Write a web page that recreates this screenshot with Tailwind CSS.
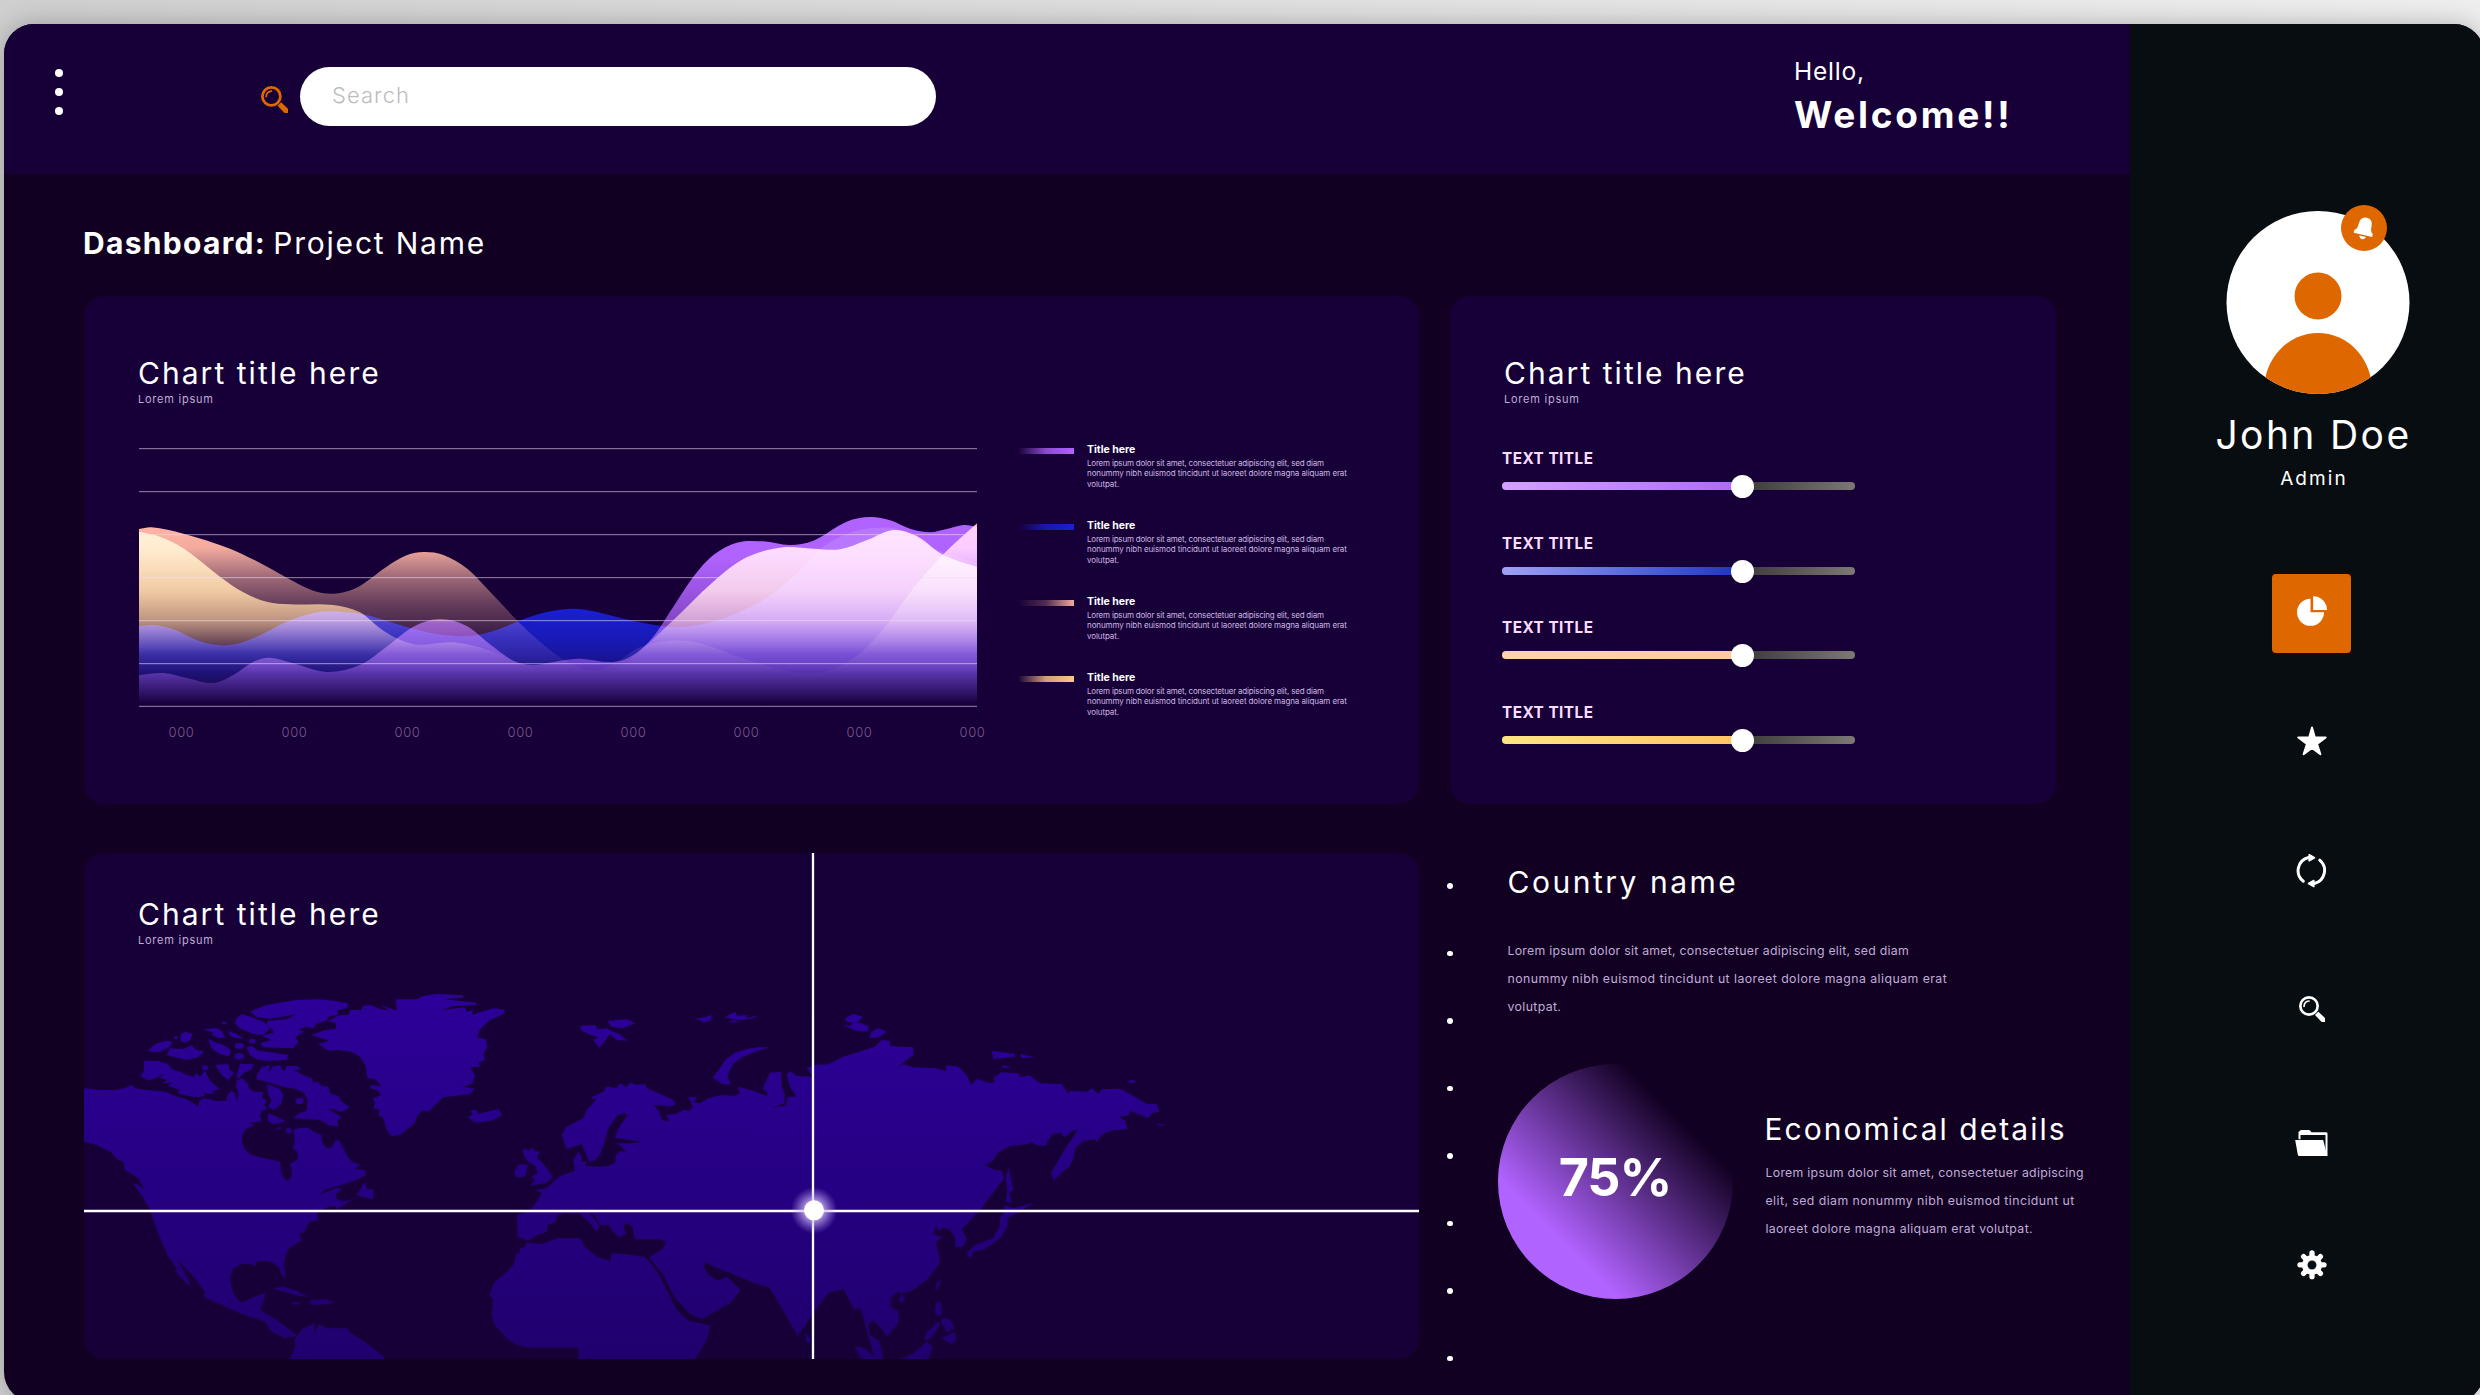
<!DOCTYPE html>
<html lang="en">
<head>
<meta charset="utf-8">
<title>Dashboard</title>
<script src="https://cdn.jsdelivr.net/npm/@tailwindcss/browser@4"></script>
</head>
<body class="w-[2480px] h-[1395px] overflow-hidden font-['Inter',sans-serif] text-white bg-linear-to-r from-[#cfcfcf] to-[#eeeeee]">
<div class="ml-1 mt-6 w-[2480px] h-[1378px] rounded-[30px] overflow-hidden flex bg-[#110022] shadow-[0_0_24px_rgba(0,0,0,0.25)]">
  <main class="w-[2126px] shrink-0">
    <header class="h-[150px] bg-[#170037] flex items-start">
      <div class="ml-[51px] mt-[45px] flex flex-col gap-[11px]">
        <i class="size-2 rounded-full bg-white"></i><i class="size-2 rounded-full bg-white"></i><i class="size-2 rounded-full bg-white"></i>
      </div>
      <svg class="ml-[198px] mt-[62px] w-[27px] h-[27px] shrink-0 text-[#df6700]" viewBox="236 108 78 78" fill="none" stroke="currentColor"><circle cx="266" cy="138" r="26" stroke-width="8"/><path d="M251 139Q252 124 266 123" stroke-width="5" stroke-linecap="round"/><path d="M284 165L294 155L314 174V186H304Z" fill="currentColor" stroke="none"/></svg>
      <div class="ml-3 mt-[43px] w-[636px] h-[59px] shrink-0 rounded-full bg-white flex items-center pl-[32px] pb-[3px] text-[22px] font-light tracking-[0.048em] text-[#bdbdbd]">Search</div>
      <div class="ml-[858px] mt-8 whitespace-nowrap">
        <p class="text-[24.5px] leading-[30px] tracking-[0.032em]">Hello,</p>
        <p class="mt-[5px] text-[37px] leading-[48px] font-bold tracking-[0.074em]">Welcome!!</p>
      </div>
    </header>
    <h1 class="mt-[49px] ml-[79px] text-[30px] leading-10 flex gap-[7px]"><b class="tracking-[0.044em]">Dashboard:</b><span class="tracking-[0.06em]">Project Name</span></h1>
    <div class="mt-[33px] ml-20 flex gap-[31px]">
      <section class="w-[1335px] h-[508px] rounded-[20px] bg-[#170037] pt-[58px] pl-[55px]">
        <h2 class="-ml-px text-[30px] leading-[38px] tracking-[0.068em]">Chart title here</h2>
        <p class="-ml-px text-[11px] leading-[14px] tracking-[0.07em] text-[#c0acd8]">Lorem ipsum</p>
        <div class="mt-[42px] flex">
          <div class="w-[838px]">
            <svg class="block isolate w-[838px] h-[259px]" viewBox="57 84 2514 777" preserveAspectRatio="none">
              <defs>
                <linearGradient id="salmon" gradientUnits="userSpaceOnUse" x1="0" x2="0" y1="300" y2="860"><stop offset=".05" stop-color="#ffb3a4"/><stop offset=".15" stop-color="#ffb3a4" stop-opacity=".95"/><stop offset=".3" stop-color="#ffb3a4" stop-opacity=".6"/><stop offset=".45" stop-color="#ffb3a4" stop-opacity=".34"/><stop offset=".62" stop-color="#ffb3a4" stop-opacity=".15"/><stop offset=".82" stop-color="#ffb3a4" stop-opacity=".03"/><stop offset="1" stop-color="#ffb3a4" stop-opacity="0"/></linearGradient>
                <linearGradient id="cream" gradientUnits="userSpaceOnUse" x1="0" x2="0" y1="300" y2="860"><stop offset=".1" stop-color="#ffc98a"/><stop offset=".38" stop-color="#ffc98a" stop-opacity=".88"/><stop offset=".54" stop-color="#ffc98a" stop-opacity=".62"/><stop offset=".66" stop-color="#ffc98a" stop-opacity=".25"/><stop offset=".72" stop-color="#ffc98a" stop-opacity=".06"/><stop offset=".82" stop-color="#ffc98a" stop-opacity="0"/></linearGradient>
                <linearGradient id="blue" gradientUnits="userSpaceOnUse" x1="0" x2="0" y1="300" y2="860"><stop offset=".48" stop-color="#1a1fd2"/><stop offset=".62" stop-color="#1a1fd2" stop-opacity=".85"/><stop offset=".72" stop-color="#1a1fd2" stop-opacity=".68"/><stop offset=".87" stop-color="#1a1fd2" stop-opacity=".25"/><stop offset="1" stop-color="#1a1fd2" stop-opacity="0"/></linearGradient>
                <linearGradient id="purple" gradientUnits="userSpaceOnUse" x1="0" x2="0" y1="300" y2="860"><stop offset=".2" stop-color="#b163ff"/><stop offset=".5" stop-color="#b163ff" stop-opacity=".75"/><stop offset=".77" stop-color="#b163ff" stop-opacity=".5"/><stop offset=".9" stop-color="#b163ff" stop-opacity=".2"/><stop offset=".98" stop-color="#b163ff" stop-opacity="0"/></linearGradient>
              </defs>
              <g id="areas"></g>
              <path d="M57 86H2571M57 215H2571M57 344H2571M57 473H2571M57 602H2571M57 731H2571M57 859H2571" stroke="#efdcf8" stroke-opacity=".6" stroke-width="3"/>
            </svg>
            <div class="mt-[17px] -ml-[14px] w-[904px] flex text-[13px] leading-4 font-light tracking-[0.05em] text-[#79588a] text-center">
              <span class="w-[113px]">000</span><span class="w-[113px]">000</span><span class="w-[113px]">000</span><span class="w-[113px]">000</span><span class="w-[113px]">000</span><span class="w-[113px]">000</span><span class="w-[113px]">000</span><span class="w-[113px]">000</span>
            </div>
          </div>
          <div class="ml-[41px] -mt-[5px] whitespace-nowrap">
            <div class="flex h-[76px]"><i class="mt-[5px] w-[56px] h-1.5 bg-linear-to-r from-[#b163ff]/0 via-[#b163ff]/75 to-[#b163ff]"></i><div class="ml-[13px]"><p class="text-[10.5px] leading-[13px] font-bold">Title here</p><p class="mt-[2px] text-[8px] leading-[10.3px] text-[#cbb8e2]"><span class="tracking-[-0.025em]">Lorem ipsum dolor sit amet, consectetuer adipiscing elit, sed diam</span><br><span class="tracking-[-0.012em]">nonummy nibh euismod tincidunt ut laoreet dolore magna aliquam erat</span><br><span class="tracking-[-0.012em]">volutpat.</span></p></div></div>
            <div class="flex h-[76px]"><i class="mt-[5px] w-[56px] h-1.5 bg-linear-to-r from-[#1a1fd2]/0 via-[#1a1fd2]/75 to-[#1a1fd2]"></i><div class="ml-[13px]"><p class="text-[10.5px] leading-[13px] font-bold">Title here</p><p class="mt-[2px] text-[8px] leading-[10.3px] text-[#cbb8e2]"><span class="tracking-[-0.025em]">Lorem ipsum dolor sit amet, consectetuer adipiscing elit, sed diam</span><br><span class="tracking-[-0.012em]">nonummy nibh euismod tincidunt ut laoreet dolore magna aliquam erat</span><br><span class="tracking-[-0.012em]">volutpat.</span></p></div></div>
            <div class="flex h-[76px]"><i class="mt-[5px] w-[56px] h-1.5 bg-linear-to-r from-[#ffb3a4]/0 via-[#ffb3a4]/25 to-[#ffb3a4]/95"></i><div class="ml-[13px]"><p class="text-[10.5px] leading-[13px] font-bold">Title here</p><p class="mt-[2px] text-[8px] leading-[10.3px] text-[#cbb8e2]"><span class="tracking-[-0.025em]">Lorem ipsum dolor sit amet, consectetuer adipiscing elit, sed diam</span><br><span class="tracking-[-0.012em]">nonummy nibh euismod tincidunt ut laoreet dolore magna aliquam erat</span><br><span class="tracking-[-0.012em]">volutpat.</span></p></div></div>
            <div class="flex h-[76px]"><i class="mt-[5px] w-[56px] h-1.5 bg-linear-to-r from-[#ffc68a]/0 via-[#ffc68a]/80 to-[#ffc68a]"></i><div class="ml-[13px]"><p class="text-[10.5px] leading-[13px] font-bold">Title here</p><p class="mt-[2px] text-[8px] leading-[10.3px] text-[#cbb8e2]"><span class="tracking-[-0.025em]">Lorem ipsum dolor sit amet, consectetuer adipiscing elit, sed diam</span><br><span class="tracking-[-0.012em]">nonummy nibh euismod tincidunt ut laoreet dolore magna aliquam erat</span><br><span class="tracking-[-0.012em]">volutpat.</span></p></div></div>
          </div>
        </div>
      </section>
      <section class="w-[606px] h-[508px] rounded-[20px] bg-[#170037] pt-[58px] pl-[52px]">
        <h2 class="ml-[2px] text-[30px] leading-[38px] tracking-[0.068em]">Chart title here</h2>
        <p class="ml-[2px] text-[11px] leading-[14px] tracking-[0.07em] text-[#c0acd8]">Lorem ipsum</p>
        <div class="mt-[44px] flex flex-col">
          <div class="h-[84.6px]"><p class="text-[15.3px] leading-[18px] font-bold tracking-[0.031em] text-[#fbdcff]">TEXT TITLE</p><div class="relative mt-[14px] w-[353px] h-2 rounded-full bg-linear-to-r from-[#2c2c2c] from-60% to-[#7d7875]"><div class="w-[241px] h-2 rounded-l-full bg-linear-to-r from-[#d3a2ff] to-[#ad68fa]"></div><i class="absolute left-[229px] -top-[7px] size-[23px] rounded-full bg-white"></i></div></div>
          <div class="h-[84.6px]"><p class="text-[15.3px] leading-[18px] font-bold tracking-[0.031em] text-[#fbdcff]">TEXT TITLE</p><div class="relative mt-[14px] w-[353px] h-2 rounded-full bg-linear-to-r from-[#2c2c2c] from-60% to-[#7d7875]"><div class="w-[241px] h-2 rounded-l-full bg-linear-to-r from-[#a2a0f5] to-[#1c30c0]"></div><i class="absolute left-[229px] -top-[7px] size-[23px] rounded-full bg-white"></i></div></div>
          <div class="h-[84.6px]"><p class="text-[15.3px] leading-[18px] font-bold tracking-[0.031em] text-[#fbdcff]">TEXT TITLE</p><div class="relative mt-[14px] w-[353px] h-2 rounded-full bg-linear-to-r from-[#2c2c2c] from-60% to-[#7d7875]"><div class="w-[241px] h-2 rounded-l-full bg-linear-to-r from-[#ffd2b0] to-[#ffc9a2]"></div><i class="absolute left-[229px] -top-[7px] size-[23px] rounded-full bg-white"></i></div></div>
          <div class="h-[84.6px]"><p class="text-[15.3px] leading-[18px] font-bold tracking-[0.031em] text-[#fbdcff]">TEXT TITLE</p><div class="relative mt-[14px] w-[353px] h-2 rounded-full bg-linear-to-r from-[#2c2c2c] from-60% to-[#7d7875]"><div class="w-[241px] h-2 rounded-l-full bg-linear-to-r from-[#ffe585] to-[#ffc463]"></div><i class="absolute left-[229px] -top-[7px] size-[23px] rounded-full bg-white"></i></div></div>
        </div>
      </section>
    </div>
    <div class="mt-[49px] ml-20 flex">
      <section class="relative w-[1335px] h-[506px] shrink-0 rounded-[20px] overflow-hidden bg-[#170037] pt-[42px] pl-[54px]">
        <h2 class="text-[30px] leading-[38px] tracking-[0.068em]">Chart title here</h2>
        <p class="text-[11px] leading-[14px] tracking-[0.07em] text-[#c0acd8]">Lorem ipsum</p>
        <svg class="absolute inset-0 w-[1335px] h-[506px]" viewBox="12 -321 4005 1518">
          <defs>
            <linearGradient id="land" gradientUnits="userSpaceOnUse" x1="0" x2="0" y1="100" y2="1200"><stop stop-color="#2d0099"/><stop offset=".5" stop-color="#260083"/><stop offset="1" stop-color="#20006d"/></linearGradient>
            <radialGradient id="glow"><stop offset=".4" stop-color="#d9c4ff" stop-opacity=".75"/><stop offset="1" stop-color="#b79bf0" stop-opacity="0"/></radialGradient>
          </defs>
          <g fill="url(#land)">
            <!-- North America -->
            <path d="M12 385L60 390 110 390 140 382 155 375 165 385 200 390 255 395 285 408 320 418 345 432 355 440 358 422 372 415 390 418 405 423 440 423 442 405 455 392 465 400 470 425 476 402 468 380 470 362 485 355 503 370 508 388 525 396 550 395 545 415 560 420 553 436 562 447 545 452 540 470 545 484 510 488 522 495 497 508 487 525 485 545 495 568 510 583 540 592 600 605 603 635 612 655 622 662 633 652 636 632 630 612 648 602 655 590 650 572 638 565 645 545 640 510 660 503 685 503 700 515 725 525 725 545 740 565 755 562 765 545 775 538 790 565 800 585 815 605 840 614 825 627 855 630 858 645 830 660 760 682 735 688 720 703 750 692 775 682 785 688 770 700 768 715 790 725 810 720 825 710 812 722 770 748 765 738 745 740 712 758 715 780 690 785 680 800 672 818 658 820 665 842 645 852 625 868 615 890 612 915 617 958 605 945 598 925 580 908 560 903 530 903 528 918 510 912 485 912 460 925 450 950 455 985 465 1008 483 1028 520 1012 557 998 550 1025 540 1050 590 1080 650 1125 640 1132 628 1130 615 1135 575 1115 555 1085 480 1060 380 1015 370 1005 377 1000 345 955 290 895 325 960 333 982 300 950 285 930 290 925 262 885 235 820 215 765 210 750 185 705 158 670 175 675 193 688 175 655 135 630 130 605 112 598 95 578 50 555 12 545Z"/>
            <path d="M192 302L235 303 262 312 280 330 300 335 320 345 340 350 350 340 360 350 375 332 390 362 418 387 395 395 405 402 370 398 375 408 350 412 310 405 292 398 300 390 265 378 275 368 245 370 262 360 240 355 250 342 235 350 205 362 182 348 192 330Z"/>
            <path d="M205 272L225 252 260 242 278 245 268 262 240 275 215 276ZM300 240L303 222 318 215 337 222 332 240 312 248ZM260 285L270 265 310 268 335 255 345 268 372 275 355 292 320 300 285 292ZM370 208L410 205 425 212 434 232 420 235 395 225 400 218ZM385 235L400 245 430 255 452 270 448 290 420 282 400 270 392 258ZM445 212L470 222 490 235 470 235 450 228ZM465 190L470 175 485 162 515 172 550 185 570 205 550 225 520 222 480 205ZM510 155L560 135 600 128 650 120 715 118 760 122 803 130 803 142 770 152 775 163 745 170 740 182 710 190 700 205 680 200 655 208 672 215 645 232 655 245 640 265 550 262 540 250 575 240 545 228 580 218 580 210 560 195 562 183 620 178 650 162 600 172 565 176 530 170ZM500 262L515 258 535 272 560 275 625 285 620 300 560 303 530 298 510 285ZM470 345L480 312 520 312 515 328 490 340 475 358ZM405 315L445 312 448 328 462 340 445 360 425 345Z"/>
            <path d="M530 345L545 322 570 315 565 340 580 318 600 316 612 335 620 318 650 318 665 328 640 330 670 345 695 355 700 368 715 365 725 378 745 380 750 400 775 408 785 425 808 440 795 452 780 455 762 448 740 445 775 465 785 475 772 480 775 500 745 495 720 480 690 478 640 475 655 462 680 452 683 420 672 400 650 388 615 382 590 375 560 365 530 358ZM560 372L600 388 610 405 603 432 580 450 565 440 575 420 565 405ZM565 460L590 470 615 482 600 490 575 492 562 480ZM585 510L600 500 608 505ZM830 705L855 665 860 685 882 690 878 718 850 712Z"/>
            <ellipse cx="478" cy="289" rx="14" ry="10"/><ellipse cx="517" cy="243" rx="10" ry="7"/><ellipse cx="478" cy="258" rx="14" ry="9"/><ellipse cx="433" cy="189" rx="7" ry="4"/><ellipse cx="659" cy="423" rx="12" ry="10"/><ellipse cx="627" cy="512" rx="9" ry="8"/><ellipse cx="288" cy="233" rx="6" ry="5"/><ellipse cx="375" cy="323" rx="9" ry="7"/><ellipse cx="648" cy="1030" rx="12" ry="4"/>
            <!-- Greenland and Iceland -->
            <path d="M695 225L735 210 768 206 768 190 745 182 780 165 805 165 810 150 845 150 848 138 870 135 900 147 928 152 902 135 950 152 948 118 1010 118 1030 108 1070 102 1150 106 1150 113 1090 118 1190 128 1188 135 1120 138 1085 150 1155 142 1160 155 1180 150 1175 165 1240 145 1275 150 1270 162 1230 180 1200 208 1190 232 1218 238 1222 262 1210 280 1215 300 1195 308 1200 320 1170 322 1185 345 1178 370 1150 380 1185 386 1170 402 1090 412 1065 435 1045 455 1030 450 1015 462 1003 490 960 525 935 528 920 510 910 475 895 465 900 450 880 445 885 430 878 415 905 405 890 390 870 385 872 375 905 378 885 357 862 355 858 320 840 290 815 275 775 270 745 272 715 252 748 242ZM1162 470L1178 465 1172 450 1190 450 1195 462 1220 455 1255 447 1267 465 1235 482 1185 488Z"/>
            <path d="M577 985L610 980 650 992 685 1010 660 1008 610 995ZM690 1020L735 1018 767 1028 745 1032 695 1035ZM630 1198L645 1160 646 1135 670 1105 705 1090 702 1120 718 1093 740 1105 800 1105 812 1118 860 1150 912 1190 912 1198Z"/>
            <!-- Africa -->
            <path d="M1340 848L1385 852 1405 845 1430 835 1500 835 1515 860 1550 890 1592 903 1595 880 1640 883 1690 890 1702 898 1735 940 1760 990 1790 1050 1825 1082 1892 1096 1880 1140 1850 1190 1842 1198 1495 1198 1495 1163 1350 1163 1310 1155 1285 1140 1265 1118 1240 1090 1235 1060 1240 1020 1228 1005 1240 972 1275 940 1302 912 1308 880 1320 880 1320 865 1335 862Z"/>
            <!-- Europe and Asia -->
            <path d="M1313 830L1312 765 1350 752 1370 725 1385 700 1367 690 1400 685 1418 668 1440 648 1485 632 1480 600 1495 575 1505 590 1505 605 1522 605 1515 618 1560 620 1585 618 1605 608 1608 585 1620 573 1638 576 1625 560 1610 550 1650 550 1688 545 1650 540 1605 533 1615 505 1643 465 1635 458 1610 468 1585 505 1575 540 1562 580 1545 600 1528 606 1515 575 1505 552 1460 567 1445 525 1460 500 1510 475 1520 450 1550 418 1530 415 1570 395 1580 380 1610 384 1620 370 1640 382 1650 368 1668 375 1695 372 1700 385 1735 400 1780 420 1787 432 1775 439 1720 435 1738 455 1745 480 1770 485 1757 465 1790 462 1810 450 1830 452 1838 440 1825 410 1850 412 1842 428 1860 430 1885 415 1925 405 1965 408 1980 398 1972 380 2020 392 2060 408 2063 398 2048 385 2070 338 2103 335 2105 380 2115 405 2112 430 2075 443 2115 437 2125 410 2150 410 2130 380 2120 345 2130 333 2150 348 2200 350 2180 325 2205 315 2245 313 2290 290 2385 260 2405 240 2430 242 2430 258 2500 262 2500 285 2445 328 2470 313 2500 322 2570 325 2597 333 2600 315 2635 320 2660 345 2673 375 2690 357 2730 370 2745 365 2740 355 2765 337 2815 340 2820 350 2850 347 2880 370 2945 373 2965 402 2970 393 3020 395 3035 385 3055 402 3065 388 3120 386 3150 402 3200 432 3230 433 3238 455 3215 460 3205 475 3150 452 3145 467 3115 470 3135 482 3142 507 3090 512 3065 525 3050 545 3045 538 3010 543 2985 565 2982 590 2968 620 2945 637 2922 662 2913 640 2950 575 2995 508 2978 512 2953 532 2943 518 2918 522 2902 545 2898 557 2868 556 2855 546 2840 553 2790 558 2755 577 2738 603 2715 615 2740 628 2765 633 2772 655 2700 750 2645 808 2660 838 2648 860 2627 862 2625 832 2608 808 2588 803 2575 812 2568 797 2560 822 2588 832 2567 845 2578 890 2578 912 2540 960 2495 992 2470 1000 2450 997 2432 1015 2432 1040 2455 1055 2455 1090 2420 1130 2408 1110 2378 1080 2365 1095 2370 1125 2400 1145 2410 1198 2385 1198 2360 1110 2343 1045 2322 1048 2290 988 2245 998 2200 1060 2153 1128 2100 1035 2068 982 2030 972 1875 908 1872 920 1885 945 1915 962 1940 950 1982 990 1950 1030 1865 1077 1830 1062 1782 1010 1750 945 1708 893 1750 865 1757 845 1740 838 1665 838 1658 800 1640 788 1630 800 1638 820 1620 832 1600 815 1585 795 1560 795 1545 765 1530 760 1560 800 1550 815 1530 790 1500 762 1450 760 1430 768 1428 785 1402 795 1400 815 1370 825 1345 842Z"/>
            <!-- European and Asian islands -->
            <path d="M1327 572L1335 565 1345 572 1360 562 1362 572 1380 575 1370 595 1385 605 1400 625 1418 650 1400 668 1350 678 1365 662 1355 650 1372 640 1368 620 1345 605 1335 592ZM1303 635L1318 612 1343 615 1335 650 1308 652ZM1500 198L1545 195 1555 208 1580 205 1600 215 1620 222 1642 242 1610 240 1590 222 1558 263 1540 240 1555 232 1525 222 1505 212ZM1582 183L1640 178 1665 190 1630 205 1595 200ZM1840 178L1875 172 1895 165 1893 180 1870 188 1862 180ZM1935 172L1965 155 1972 168 2000 165 2000 175 2035 166 2020 175 1985 180 1960 178ZM1945 187L1960 180 1980 186ZM1898 352L1920 325 1935 300 1965 278 1990 270 2030 262 2070 262 2025 275 1990 290 1960 310 1942 345 1952 374 1925 372ZM2295 175L2320 162 2348 170 2330 188 2300 185ZM2285 195L2310 198 2318 188 2340 188 2368 200 2362 215 2330 212ZM2368 235L2375 215 2395 205 2420 215 2400 230ZM2735 272L2805 282 2805 290 2740 297ZM2820 282L2865 292 2825 295ZM2760 322L2775 315 2795 325ZM3142 365L3155 359 3172 365 3155 369ZM3225 490L3258 494 3240 497ZM2785 622L2800 690 2788 698 2795 728 2778 725 2782 690 2778 655ZM2772 735L2800 745 2862 728 2820 755 2790 770 2782 775 2782 800 2760 835 2715 868 2680 875 2672 897 2660 880 2685 855 2740 835 2758 800 2762 770 2775 755ZM2566 992L2572 965 2584 960 2574 985ZM2565 1060L2568 1028 2583 1026 2587 1060 2575 1068ZM2533 1142L2540 1115 2575 1085 2580 1095 2552 1135ZM2582 1085L2600 1115 2612 1112 2605 1095 2618 1112 2622 1100 2610 1078 2588 1074ZM2585 1135L2625 1115 2628 1140 2615 1152ZM2460 1198L2500 1180 2540 1145 2558 1158 2545 1198ZM2323 1158L2355 1165 2390 1198 2345 1198ZM2175 1115L2190 1135 2190 1150 2178 1145ZM2465 1000L2474 1018 2468 1030 2456 1022Z"/>
          </g>
          <path d="M12 753H4017M2199 -321V1198" stroke="#fff" stroke-width="7"/>
          <circle cx="2202" cy="751" r="70" fill="url(#glow)"/><circle cx="2202" cy="751" r="30" fill="#fff"/>
        </svg>
      </section>
      <div class="ml-7 mt-[30px] flex flex-col gap-[62px]">
        <i class="size-[5.5px] rounded-full bg-white"></i><i class="size-[5.5px] rounded-full bg-white"></i><i class="size-[5.5px] rounded-full bg-white"></i><i class="size-[5.5px] rounded-full bg-white"></i><i class="size-[5.5px] rounded-full bg-white"></i><i class="size-[5.5px] rounded-full bg-white"></i><i class="size-[5.5px] rounded-full bg-white"></i><i class="size-[5.5px] rounded-full bg-white"></i>
      </div>
      <div class="ml-[45px] mt-[10px] whitespace-nowrap">
        <h2 class="ml-[10px] text-[30px] leading-[38px] tracking-[0.084em]">Country name</h2>
        <p class="ml-2.5 mt-[36px] text-[12.3px] leading-7 text-[#c0acd8]"><span class="tracking-[0.021em]">Lorem ipsum dolor sit amet, consectetuer adipiscing elit, sed diam</span><br><span class="tracking-[0.037em]">nonummy nibh euismod tincidunt ut laoreet dolore magna aliquam erat</span><br><span class="tracking-[0.03em]">volutpat.</span></p>
        <div class="mt-[43px] flex">
          <div class="size-[235px] shrink-0 rounded-full bg-linear-45 from-[#b163ff] from-26% to-[#b163ff]/0 to-77% flex items-center justify-center pb-[7px] text-[52px] font-bold tracking-[-0.02em]">75%</div>
          <div class="ml-8 mt-[46px]">
            <h2 class="text-[30px] leading-[38px] tracking-[0.068em]">Economical details</h2>
            <p class="mt-[11px] ml-px text-[12.3px] leading-7 text-[#c0acd8]"><span class="tracking-[0.023em]">Lorem ipsum dolor sit amet, consectetuer adipiscing</span><br><span class="tracking-[0.036em]">elit, sed diam nonummy nibh euismod tincidunt ut</span><br><span class="tracking-[0.029em]">laoreet dolore magna aliquam erat volutpat.</span></p>
          </div>
        </div>
      </div>
    </div>
  </main>
  <aside class="w-[354px] shrink-0 bg-[#070d10] pl-[9px] flex flex-col items-center whitespace-nowrap">
    <svg class="mt-[180px] ml-[12px] w-[184px] h-[190px] shrink-0 overflow-visible" viewBox="2226 204 184 190">
      <defs><clipPath id="face"><circle cx="2318" cy="302.5" r="91.5"/></clipPath></defs>
      <circle cx="2318" cy="302.5" r="91.5" fill="#fff"/>
      <g fill="#df6700"><circle cx="2318" cy="296" r="23.5"/><ellipse cx="2318" cy="390" rx="54" ry="57" clip-path="url(#face)"/><circle cx="2364" cy="228" r="23"/></g>
      <g transform="translate(2364.5 228) rotate(13)" fill="#fff"><path d="M-9.500 7V4Q-6.500 3-6.500-3Q-6.500-10.500 0-10.500Q6.500-10.500 6.500-3Q6.500 3 9.500 4V7Z"/><path d="M-3.500 8.500H3.500Q2.500 11.500 0 11.500Q-2.500 11.500-3.500 8.500Z"/></g>
    </svg>
    <p class="mt-[17px] ml-[4px] text-[39px] leading-[48px] tracking-[0.061em]">John Doe</p>
    <p class="mt-[8px] ml-[5px] text-[19px] leading-6 tracking-[0.11em]">Admin</p>
    <div class="mt-[83px] size-[79px] shrink-0 rounded-[4px] bg-[#df6700] flex items-center justify-center pb-[5px]"><svg class="w-[30px] h-[30px]" viewBox="230 168 91 90" fill="#fff"><path d="M271 176A41 41 0 1 0 312 217H271Z"/><path d="M279 168A42 42 0 0 1 321 210H279Z"/></svg></div>
    <svg class="mt-[73px] w-[30px] h-[30px] shrink-0" viewBox="230 557 91 90" fill="#fff" stroke="#fff" stroke-width="6" stroke-linejoin="round"><path d="M275.500 561L284 591L317 591L291 611L301 642L275.500 623L250 642L260 611L234 591L267 591Z"/></svg>
    <svg class="mt-[97px] w-[31px] h-[35px] shrink-0" viewBox="228 940 94 105" fill="none" stroke="#fff" stroke-width="9" stroke-linecap="round"><path d="M250 1025A41 41 0 0 1 266 953M300 961A41 41 0 0 1 284 1032"/><path d="M268 945L284 954L268 963ZM282 1023L266 1032L282 1041Z" fill="#fff" stroke-width="5" stroke-linejoin="round"/></svg>
    <svg class="mt-[108px] w-[26px] h-[26px] shrink-0 text-white" viewBox="236 108 78 78" fill="none" stroke="currentColor"><circle cx="266" cy="138" r="26" stroke-width="8"/><path d="M251 139Q252 124 266 123" stroke-width="5" stroke-linecap="round"/><path d="M284 165L294 155L314 174V186H304Z" fill="currentColor" stroke="none"/></svg>
    <svg class="mt-[108px] w-[33px] h-[26px] shrink-0" viewBox="227 510 98 78" fill="#fff"><path d="M237 538V516L244 510H270L276 517H320Q324 517 324 521V588H318V525H243V538Z"/><path d="M227 540H311L323 588H239Q236 588 235 584Z"/></svg>
    <svg class="mt-[94px] w-[30px] h-[30px] shrink-0" viewBox="230 871 91 91" stroke="#fff" stroke-width="16" stroke-linecap="round"><path d="M275.500 880V952M239 916H312M250 891L301 942M301 891L250 942"/><circle cx="275.500" cy="916.500" r="22" fill="#070d10" stroke-width="17"/></svg>
  </aside>
</div>
<script>
// [x, y] samples of each series, drawn as smooth filled areas
const series = {
  salmon: [[57,327],[95,322],[190,341],[330,386],[430,434],[520,484],[580,512],[640,521],[710,503],[800,440],[860,406],[912,396],[970,405],[1040,445],[1110,515],[1195,605],[1260,665],[1330,718],[1420,752],[1490,725],[1560,682],[1650,662],[1740,670],[1890,722],[2060,760],[2180,728],[2280,640],[2380,505],[2470,403],[2571,310]],
  cream: [[57,335],[120,350],[190,385],[300,470],[370,517],[440,545],[510,553],[640,555],[720,577],[780,625],[830,655],[890,674],[1000,667],[1110,692],[1200,730],[1320,770],[1440,775],[1530,718],[1650,610],[1780,485],[1880,412],[1990,382],[2080,386],[2160,388],[2240,361],[2320,330],[2390,348],[2470,405],[2571,441]],
  blue: [[57,618],[100,615],[160,628],[240,664],[320,676],[400,655],[500,605],[590,577],[660,575],[740,585],[850,618],[950,642],[1050,648],[1130,630],[1230,590],[1330,568],[1400,570],[1540,603],[1650,620],[1750,612],[1860,575],[1960,520],[2050,440],[2110,380],[2190,338],[2260,324],[2340,330],[2450,390],[2571,430]],
  purple: [[57,765],[130,759],[200,774],[280,789],[340,765],[400,725],[450,713],[520,730],[620,756],[720,735],[800,680],[880,620],[960,597],[1040,618],[1110,673],[1180,722],[1240,735],[1320,722],[1380,716],[1480,726],[1540,705],[1600,650],[1660,560],[1720,470],[1780,405],[1850,368],[1930,364],[2010,375],[2080,362],[2180,305],[2250,291],[2310,301],[2370,326],[2430,337],[2480,327],[2530,315],[2571,320]]
};
const areas = document.getElementById('areas');
for (const [name, p] of Object.entries(series)) {
  let d = `M${p[0]}`;
  for (let i = 0; i < p.length - 1; i++) {
    const a = p[i - 1] || p[i], b = p[i], c = p[i + 1], e = p[i + 2] || c;
    const s = c[0] - b[0];
    const t1 = (c[1] - a[1]) / (c[0] - a[0]), t2 = (e[1] - b[1]) / (e[0] - b[0]);
    d += `C${b[0] + s / 3},${b[1] + t1 * s / 3} ${c[0] - s / 3},${c[1] - t2 * s / 3} ${c}`;
  }
  const el = document.createElementNS('http://www.w3.org/2000/svg', 'path');
  el.setAttribute('d', d + 'V860H57Z');
  el.setAttribute('fill', `url(#${name})`);
  el.setAttribute('class', 'mix-blend-screen');
  areas.append(el);
}
</script>
</body>
</html>
